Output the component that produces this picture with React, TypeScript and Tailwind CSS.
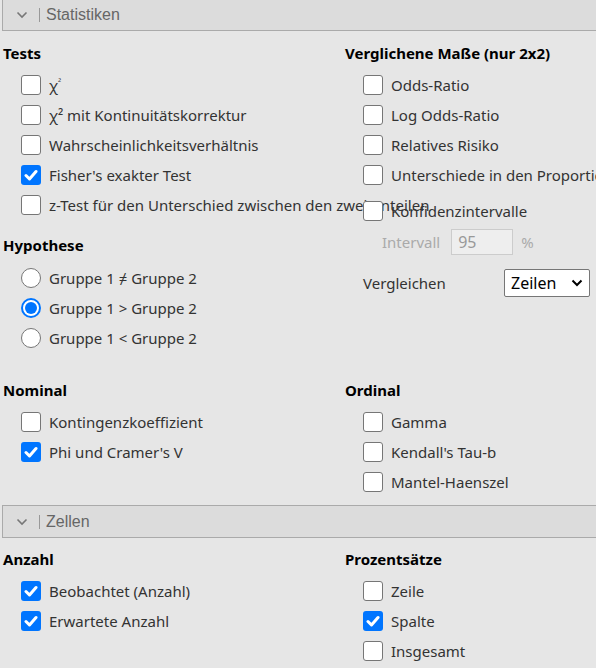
import React from "react";

function Check({ checked }: { checked?: boolean }) {
  if (checked) {
    return (
      <div className="w-[20px] h-[20px] shrink-0 rounded-[3px] bg-[#0075ff] flex items-center justify-center">
        <svg width="14" height="14" viewBox="0 0 14 14">
          <polyline points="2,7.5 5.5,11 12,3.5" fill="none" stroke="white" strokeWidth="3" strokeLinecap="round" strokeLinejoin="round" />
        </svg>
      </div>
    );
  }
  return <div className="w-[20px] h-[20px] shrink-0 rounded-[3px] border border-[#767676] bg-white" />;
}

function Radio({ checked }: { checked?: boolean }) {
  if (checked) {
    return (
      <div className="w-[20px] h-[20px] shrink-0 rounded-full border-2 border-[#0075ff] bg-white flex items-center justify-center">
        <div className="w-[12px] h-[12px] rounded-full bg-[#0075ff]" />
      </div>
    );
  }
  return <div className="w-[20px] h-[20px] shrink-0 rounded-full border border-[#767676] bg-white" />;
}

function CRow({ label, checked }: { label: React.ReactNode; checked?: boolean }) {
  return (
    <div className="h-[30px] flex items-center pl-[18px] whitespace-nowrap">
      <Check checked={checked} />
      <span className="ml-[8px]">{label}</span>
    </div>
  );
}

function RRow({ label, checked }: { label: string; checked?: boolean }) {
  return (
    <div className="h-[30px] flex items-center pl-[18px] whitespace-nowrap">
      <Radio checked={checked} />
      <span className="ml-[8px]">{label}</span>
    </div>
  );
}

function H({ children, className = "" }: { children: React.ReactNode; className?: string }) {
  return <div className={"h-[20px] leading-[20px] font-bold text-black whitespace-nowrap " + className}>{children}</div>;
}

function Header({ title, className = "" }: { title: string; className?: string }) {
  return (
    <div className={"ml-[2px] h-[33px] border border-r-0 border-[#aaaaaa] bg-[#dcdcdc] flex items-center font-['Liberation_Sans',Arial,sans-serif] text-[16px] text-[#666666] " + className}>
      <svg className="ml-[13px]" width="12" height="8" viewBox="0 0 12 8">
        <polyline points="1.5,1.5 6,6 10.5,1.5" fill="none" stroke="#777777" strokeWidth="1.6" />
      </svg>
      <div className="ml-[11px] w-[1px] h-[14px] bg-[#999999]" />
      <span className="ml-[6px]">{title}</span>
    </div>
  );
}

export default function App() {
  return (
    <div className="w-[596px] h-[668px] overflow-hidden bg-[#e6e6e6] font-['Noto_Sans',sans-serif] text-[15px] text-[#333333]">
      <Header title="Statistiken" className="-mt-[2px]" />
      <div className="grid grid-cols-[342px_minmax(0,1fr)] pl-[3px] pt-[12px]">
        <div>
          <H>Tests</H>
          <div className="mt-[7px]">
            <CRow label={<>χ<sup className="text-[9px]">²</sup></>} />
            <CRow label={<>χ² mit Kontinuitätskorrektur</>} />
            <CRow label="Wahrscheinlichkeitsverhältnis" />
            <CRow label="Fisher's exakter Test" checked />
            <CRow label="z-Test für den Unterschied zwischen den zwei Anteilen" />
          </div>
          <H className="mt-[15px]">Hypothese</H>
          <div className="mt-[8px]">
            <RRow label="Gruppe 1 ≠ Gruppe 2" />
            <RRow label="Gruppe 1 > Gruppe 2" checked />
            <RRow label="Gruppe 1 < Gruppe 2" />
          </div>
        </div>
        <div>
          <H>Verglichene Maße (nur 2x2)</H>
          <div className="mt-[7px]">
            <CRow label="Odds-Ratio" />
            <CRow label="Log Odds-Ratio" />
            <CRow label="Relatives Risiko" />
            <CRow label="Unterschiede in den Proportionen" />
          </div>
          <div className="mt-[6px]">
            <CRow label="Konfidenzintervalle" />
          </div>
          <div className="mt-[3px] h-[26px] flex items-center pl-[37px] text-[#aaaaaa]">
            <span>Intervall</span>
            <div className="ml-[11px] w-[62px] h-[26px] border border-[#cccccc] bg-[#eeeeee] flex items-center pl-[6px] text-[#999999] text-[16px]">95</div>
            <span className="ml-[8px]">%</span>
          </div>
          <div className="mt-[14px] h-[28px] flex items-center pl-[18px]">
            <span className="w-[141px]">Vergleichen</span>
            <div className="w-[86px] h-[28px] border border-[#767676] rounded-[2px] bg-white flex items-center justify-between pl-[6px] pr-[6px] text-[16px] text-black">
              <span>Zeilen</span>
              <svg width="12" height="8" viewBox="0 0 12 8">
                <polyline points="1.5,1.5 6,6 10.5,1.5" fill="none" stroke="#000000" strokeWidth="2" />
              </svg>
            </div>
          </div>
        </div>
      </div>
      <div className="grid grid-cols-[342px_minmax(0,1fr)] pl-[3px] mt-[27px]">
        <div>
          <H>Nominal</H>
          <div className="mt-[7px]">
            <CRow label="Kontingenzkoeffizient" />
            <CRow label="Phi und Cramer's V" checked />
          </div>
        </div>
        <div>
          <H>Ordinal</H>
          <div className="mt-[7px]">
            <CRow label="Gamma" />
            <CRow label="Kendall's Tau-b" />
            <CRow label="Mantel-Haenszel" />
          </div>
        </div>
      </div>
      <Header title="Zellen" className="mt-[8px]" />
      <div className="grid grid-cols-[342px_minmax(0,1fr)] pl-[3px] pt-[11px]">
        <div>
          <H>Anzahl</H>
          <div className="mt-[7px]">
            <CRow label="Beobachtet (Anzahl)" checked />
            <CRow label="Erwartete Anzahl" checked />
          </div>
        </div>
        <div>
          <H>Prozentsätze</H>
          <div className="mt-[7px]">
            <CRow label="Zeile" />
            <CRow label="Spalte" checked />
            <CRow label="Insgesamt" />
          </div>
        </div>
      </div>
    </div>
  );
}
